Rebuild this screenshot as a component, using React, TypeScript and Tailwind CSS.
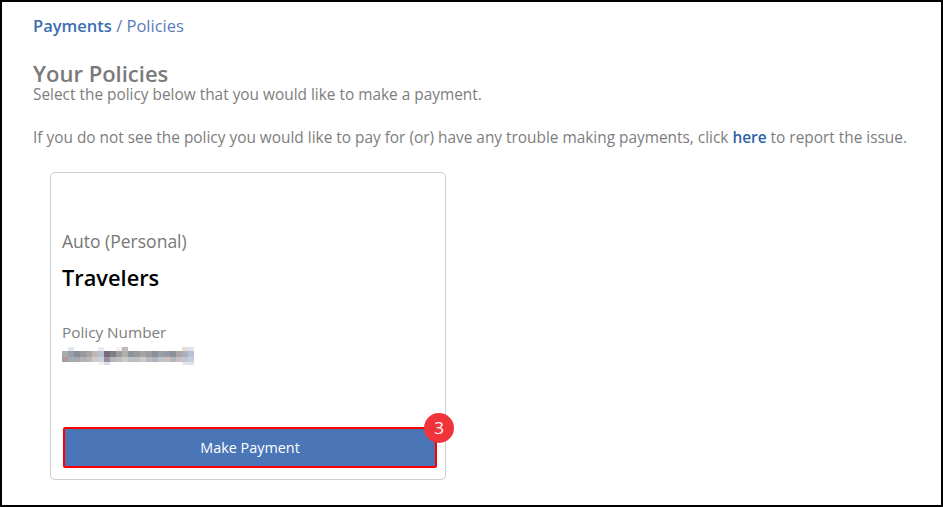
import React from "react";

const mosaic: string[][] = [
  ["#ffffff","#e0e8ee","#ffffff","#ffffff","#ffffff","#ffffff","#e8ecf0","#ffffff","#ffffff","#f8f0ea","#c0b8c0","#ffffff","#ffffff","#ffffff","#ffffff","#ffffff","#ffffff","#ffffff","#ffffff","#ffffff","#eedcd4","#dce6f0"],
  ["#a8acb0","#98a0a6","#8a8e94","#959aa0","#a8a2a2","#c0b8b0","#b4c0cc","#786a78","#7c8086","#9a9a9a","#b0b0aa","#8a949c","#969a9c","#a4a4a0","#9a9aa0","#8c9098","#9a9ea6","#969aa2","#8e9298","#aca6a6","#aab0c0","#b8c2d2"],
  ["#b09c94","#a2acb4","#a6a8ae","#b6b2b2","#beb6b4","#d0cac6","#c8d2dc","#9a8ca2","#b4b6ba","#bcbec2","#cacac4","#b8c0c8","#bcbec2","#cecac6","#b8b8be","#b0b4be","#bcc2c8","#d0c0bc","#b4b6be","#c6c0c6","#c2c6d2","#c6cede"],
  ["#ffffff","#ffffff","#ffffff","#ffffff","#ffffff","#ffffff","#f8f0e8","#dcdeea","#ffffff","#ffffff","#ffffff","#ffffff","#ffffff","#ffffff","#ffffff","#ffffff","#ffffff","#ffffff","#ffffff","#ffffff","#ece6e0","#dce4ee"],
];

function Mosaic() {
  const bw = 6;
  const heights = [4, 6, 5, 3];
  let y = 0;
  const rects: React.ReactElement[] = [];
  mosaic.forEach((row, ri) => {
    row.forEach((c, ci) => {
      rects.push(<rect key={`${ri}-${ci}`} x={ci * bw} y={y} width={bw} height={heights[ri]} fill={c} />);
    });
    y += heights[ri];
  });
  return (
    <svg width={132} height={18} viewBox="0 0 132 18" className="block">
      {rects}
    </svg>
  );
}

export default function App() {
  return (
    <div
      className="h-[507px] w-[943px] border-2 border-black bg-white text-[#7a7a7a] overflow-hidden"
      style={{ fontFamily: '"Open Sans", "Noto Sans", sans-serif' }}
    >
      <div className="pl-[31px] pt-[12px]">
        <div className="text-[16.5px] leading-[24px]">
          <span className="font-semibold text-[#3b6fae]">Payments</span>
          <span className="text-[#5b7cba]"> / Policies</span>
        </div>
        <h1 className="mt-[24px] text-[22px] leading-[22px] font-semibold text-[#7a7a7a]">Your Policies</h1>
        <p className="mt-[1px] text-[15.4px] leading-[20px] text-[#7d7d7d]">Select the policy below that you would like to make a payment.</p>
        <p className="mt-[23px] text-[15.4px] leading-[20px] text-[#7d7d7d] whitespace-nowrap">
          If you do not see the policy you would like to pay for (or) have any trouble making payments, click{" "}
          <span className="font-semibold text-[#2f64a6]">here</span> to report the issue.
        </p>
        <div className="mt-[24px] ml-[17px] w-[396px] h-[308px] rounded-[5px] border border-[#cfcfcf] flex flex-col">
          <div className="mt-[56px] pl-[11px] text-[17.5px] leading-[24px] text-[#777]">Auto (Personal)</div>
          <div className="mt-[11px] pl-[11px] text-[21.8px] leading-[28px] font-semibold text-black">Travelers</div>
          <div className="mt-[30px] pl-[11px] text-[15.3px] leading-[20px] text-[#7d7d7d]">Policy Number</div>
          <div className="mt-[5px] pl-[11px]">
            <Mosaic />
          </div>
          <div className="relative mt-[62px] ml-[12px] w-[374px]">
            <button className="w-full h-[41px] border-2 border-[#ff0000] bg-[#4a76b8] text-white text-[14.4px] leading-[20px] rounded-[2px]">
              Make Payment
            </button>
            <div className="absolute right-[-17px] top-[-14px] w-[30px] h-[30px] rounded-full bg-[#f1343b] text-white text-[17px] flex items-center justify-center">
              3
            </div>
          </div>
        </div>
      </div>
    </div>
  );
}
